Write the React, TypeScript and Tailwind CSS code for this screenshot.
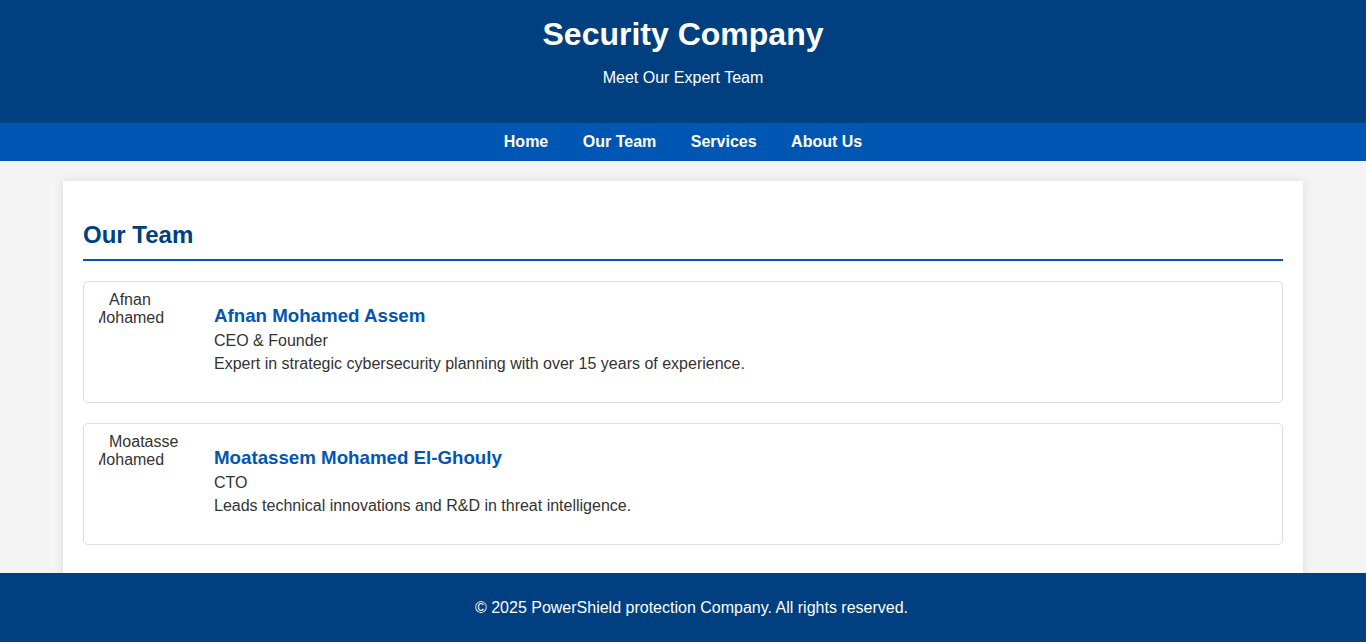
const NAV = ['Home', 'Our Team', 'Services', 'About Us']

const TEAM = [
  {
    alt: ['Afnan', 'Mohamed'],
    name: 'Afnan Mohamed Assem',
    role: 'CEO & Founder',
    bio: 'Expert in strategic cybersecurity planning with over 15 years of experience.',
  },
  {
    alt: ['Moatassem', 'Mohamed'],
    name: 'Moatassem Mohamed El-Ghouly',
    role: 'CTO',
    bio: 'Leads technical innovations and R&D in threat intelligence.',
  },
]

export default function App() {
  return (
    <div className="min-h-screen bg-[#f4f4f4] text-[#333] font-['Liberation_Sans',Arial,sans-serif] pb-[90px]">
      {/* Header */}
      <header className="bg-[#004080] text-white text-center pt-[16px] pb-[36px]">
        <h1 className="text-[32px] leading-[37px] font-bold">Security Company</h1>
        <p className="mt-[16px] text-[16px] leading-[18px]">Meet Our Expert Team</p>
      </header>

      {/* Nav */}
      <nav className="bg-[#0056b3] h-[38px] flex items-center justify-center gap-[34.5px]">
        {NAV.map(n => (
          <a key={n} className="text-white font-bold text-[16px] leading-[18px] cursor-pointer">{n}</a>
        ))}
      </nav>

      {/* Main */}
      <main className="mx-[63px] mt-[20px] bg-white px-[20px] pt-[20px] pb-[40px] shadow-[0_0_10px_rgba(0,0,0,0.1)]">
        <h2 className="mt-[20px] text-[24px] leading-[28px] font-bold text-[#004080] pb-[10px] border-b-2 border-[#0056b3]">
          Our Team
        </h2>
        <div className="mt-[20px] flex flex-col gap-[20px]">
          {TEAM.map((m, i) => (
            <div key={i} className="h-[122px] border border-[#ddd] rounded-[5px] p-[15px] flex items-start">
              <div className="w-[80px] h-[36px] -mt-[6px] mr-[35px] shrink-0 overflow-hidden">
                <div className="-ml-[6px] w-[200px] text-[16px] leading-[18px] text-[#333]">
                  <div className="pl-[16px] whitespace-nowrap">{m.alt[0]}</div>
                  <div className="whitespace-nowrap">{m.alt[1]}</div>
                </div>
              </div>
              <div className="pt-[8px]">
                <h3 className="text-[18.72px] leading-[22px] font-bold text-[#0056b3] mb-[5px]">{m.name}</h3>
                <p className="text-[16px] leading-[18px]">{m.role}</p>
                <p className="mt-[5px] text-[16px] leading-[18px]">{m.bio}</p>
              </div>
            </div>
          ))}
        </div>
      </main>

      {/* Footer */}
      <footer className="fixed bottom-0 left-0 right-0 h-[69px] bg-[#004080] text-white flex items-center justify-center pl-[17px]">
        <p className="text-[16px] leading-[18px]">© 2025 PowerShield protection Company. All rights reserved.</p>
      </footer>
    </div>
  )
}
